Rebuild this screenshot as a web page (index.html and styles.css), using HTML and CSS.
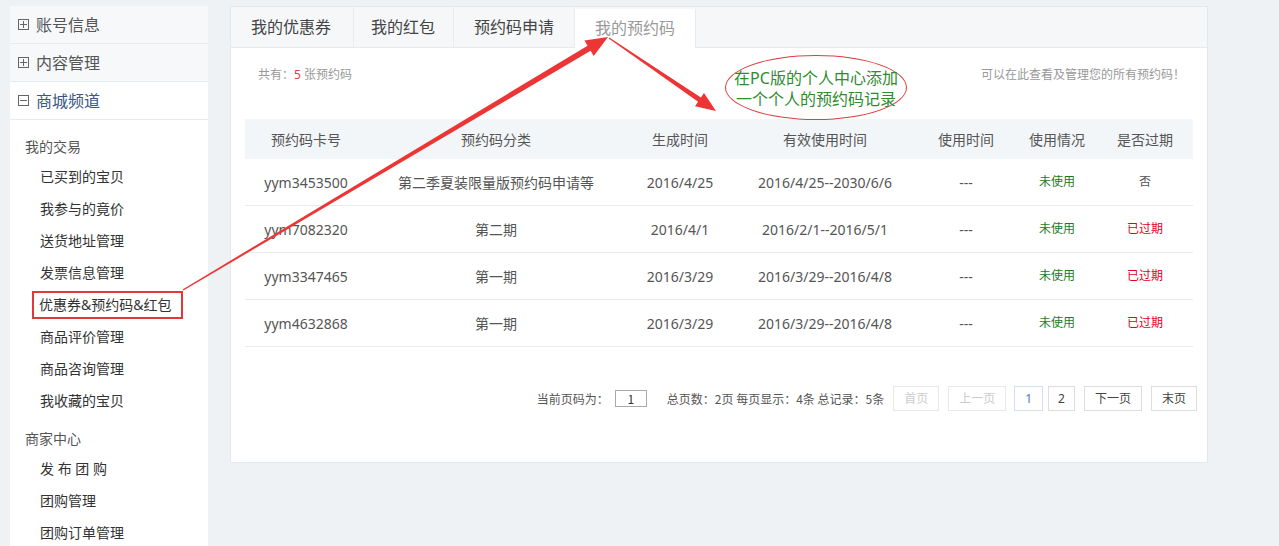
FILE: index.html
```html
<!DOCTYPE html>
<html>
<head>
<meta charset="utf-8" />
<title>我的预约码</title>
<link rel="stylesheet" href="styles.css">
</head>
<body>
<div class="page">
	<aside class="sidebar">
		<div class="nav_group"><span class="nav_icon plus"></span>账号信息</div>
		<div class="nav_group"><span class="nav_icon plus"></span>内容管理</div>
		<div class="nav_group open"><span class="nav_icon"></span>商城频道</div>
		<div class="nav_sub">
			<div class="nav_title">我的交易</div>
			<a class="nav_item">已买到的宝贝</a>
			<a class="nav_item">我参与的竟价</a>
			<a class="nav_item">送货地址管理</a>
			<a class="nav_item">发票信息管理</a>
			<a class="nav_item"><span class="mark_box">优惠券&amp;预约码&amp;红包</span></a>
			<a class="nav_item">商品评价管理</a>
			<a class="nav_item">商品咨询管理</a>
			<a class="nav_item">我收藏的宝贝</a>
			<div class="nav_title second">商家中心</div>
			<a class="nav_item">发 布 团 购</a>
			<a class="nav_item">团购管理</a>
			<a class="nav_item">团购订单管理</a>
		</div>
	</aside>
	<main class="panel">
		<ul class="tabs">
			<li class="tab">我的优惠券</li>
			<li class="tab">我的红包</li>
			<li class="tab">预约码申请</li>
			<li class="tab active">我的预约码</li>
		</ul>
		<div class="panel_body">
			<div class="info_bar">
				<span>共有：<em class="num">5</em> 张预约码</span>
				<span>可以在此查看及管理您的所有预约码！</span>
			</div>
			<table class="code_table">
				<colgroup>
					<col style="width:122px"><col style="width:258px"><col style="width:110px"><col style="width:180px"><col style="width:102px"><col style="width:80px"><col style="width:96px">
				</colgroup>
				<thead>
					<tr><th>预约码卡号</th><th>预约码分类</th><th>生成时间</th><th>有效使用时间</th><th>使用时间</th><th>使用情况</th><th>是否过期</th></tr>
				</thead>
				<tbody>
					<tr><td>yym3453500</td><td>第二季夏装限量版预约码申请等</td><td>2016/4/25</td><td>2016/4/25--2030/6/6</td><td>---</td><td class="unused">未使用</td><td class="small">否</td></tr>
					<tr><td>yym7082320</td><td>第二期</td><td>2016/4/1</td><td>2016/2/1--2016/5/1</td><td>---</td><td class="unused">未使用</td><td class="expired">已过期</td></tr>
					<tr><td>yym3347465</td><td>第一期</td><td>2016/3/29</td><td>2016/3/29--2016/4/8</td><td>---</td><td class="unused">未使用</td><td class="expired">已过期</td></tr>
					<tr><td>yym4632868</td><td>第一期</td><td>2016/3/29</td><td>2016/3/29--2016/4/8</td><td>---</td><td class="unused">未使用</td><td class="expired">已过期</td></tr>
				</tbody>
			</table>
			<div class="pager">
				<span>当前页码为：</span>
				<span class="page_input">1</span>
				<span>总页数：2页 每页显示：4条 总记录：5条</span>
				<a class="pg_btn disabled">首页</a>
				<a class="pg_btn disabled">上一页</a>
				<a class="pg_btn current">1</a>
				<a class="pg_btn num_btn">2</a>
				<a class="pg_btn">下一页</a>
				<a class="pg_btn">末页</a>
			</div>
		</div>
	</main>
</div>
<div class="note">在PC版的个人中心添加<br>一个个人的预约码记录</div>
<svg class="arrows" width="1279" height="546" viewBox="0 0 1279 546">
	<polygon points="183.4,290.6 590.6,50.8 593.7,56 608,37 584.5,40.5 587.6,45.7 182.6,289.4" />
	<polygon points="608.7,38.4 698.1,101.8 695,106.3 716,111 704,93.1 700.9,97.6 609.3,37.6" />
</svg>
</body>
</html>
```
FILE: styles.css
```css
body{margin: 0;height: 546px;overflow: hidden;position: relative;background: #eef2f5;font: normal 14px/1.5 "Noto Sans", "Noto Sans CJK SC", sans-serif;color: #555;}
ul,li{margin: 0;padding: 0;list-style: none;}
em{font-style: normal;}
a{text-decoration: none;color: inherit;}

.page{display: flex;gap: 22px;padding: 6px 0 0 10px;}

/* sidebar */
.sidebar{width: 198px;min-height: 560px;background: #fff;flex-shrink: 0;}
.nav_group{display: flex;align-items: center;height: 37px;padding-left: 8px;border-bottom: 1px solid #e6ebef;background: #f6f8fa;font-size: 16px;color: #555;}
.nav_group.open{background: #fff;color: #3a5888;}
.nav_icon{width: 9px;height: 9px;margin-right: 7px;border: 1px solid #666;background: linear-gradient(#666,#666) center/7px 1px no-repeat;}
.nav_icon.plus{background: linear-gradient(#666,#666) center/7px 1px no-repeat, linear-gradient(#666,#666) center/1px 7px no-repeat;}
.nav_sub{padding: 12px 0 0 15px;}
.nav_title{line-height: 29px;font-size: 14px;color: #555;}
.nav_title.second{margin-top: 8px;line-height: 28px;}
.nav_item{display: block;padding-left: 15px;line-height: 32px;font-size: 14px;color: #333;}
.mark_box{display: inline-block;margin-left: -8px;padding: 2px 9px 2px 5px;line-height: 20px;border: 2px solid #e3373a;}

/* main panel */
.panel{width: 978px;height: 457px;box-sizing: border-box;border: 1px solid #e3e8ec;background: #fff;}
.tabs{display: flex;height: 40px;background: #f5f7f9;border-bottom: 1px solid #e6eaed;}
.tab{padding: 0 20px;line-height: 41px;font-size: 16px;color: #444;border-right: 1px solid #e8ecef;}
.tab:nth-child(1){padding: 0 22px 0 20px;}
.tab:nth-child(2){padding: 0 18px 0 17px;}
.tab.active{height: 39px;margin-top: 2px;line-height: 39px;background: #fff;color: #999;}
.panel_body{padding: 0 14px;}
.info_bar{display: flex;justify-content: space-between;height: 71px;box-sizing: border-box;padding: 18px 8px 0 13px;line-height: 18px;font-size: 12px;color: #999;}
.info_bar .num{color: #e4393c;}

.code_table{width: 100%;border-collapse: collapse;table-layout: fixed;}
.code_table th{height: 40px;padding: 0;background: #f3f6f8;font-weight: normal;color: #555;}
.code_table td{height: 46px;padding: 0;text-align: center;border-bottom: 1px solid #e8eaec;color: #555;white-space: nowrap;}
.code_table td.unused{font-size: 12px;color: #1d7a1d;}
.code_table td.expired{font-size: 12px;color: #e4001b;}
.code_table td.small{font-size: 12px;}

.pager{display: flex;justify-content: flex-end;align-items: center;margin: 39px -4px 0 0;font-size: 12px;color: #555;}
.pager span{font-family: "Noto Sans CJK SC", sans-serif;}
.page_input{width: 30px;height: 15px;margin: 0 20px 0 6px;border: 1px solid #aaa;line-height: 15px;text-align: center;color: #333;}
.pg_btn{height: 23px;margin-left: 9px;padding: 0 10px;line-height: 23px;border: 1px solid #ddd;color: #444;}
.pg_btn.disabled{color: #ccc;border-color: #e8e8e8;}
.pg_btn.current{margin-left: 8px;padding: 0 10px;color: #4a7ab8;border-color: #d3dfec;}
.pg_btn.num_btn{margin-left: 5px;padding: 0 9px;}

/* annotation layer */
.note{position: absolute;left: 725px;top: 55px;width: 182px;height: 65px;box-sizing: border-box;padding-top: 12px;border: 1px solid #d9403f;border-radius: 50%;text-align: center;font-size: 16px;line-height: 21px;color: #2e8b2e;}
.arrows{position: absolute;left: 0;top: 0;pointer-events: none;}
.arrows polygon{fill: #ee3535;}
```
